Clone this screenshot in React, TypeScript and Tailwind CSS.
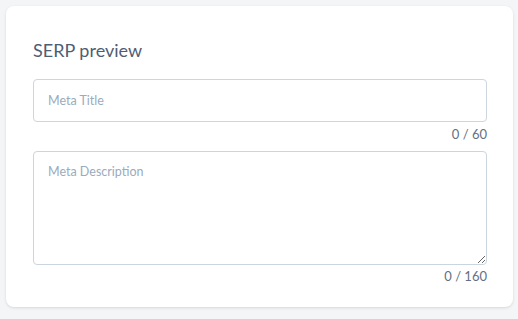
export default function App() {
  return (
    <div
      className="min-h-screen bg-[#f4f5f7] p-[6px]"
      style={{ fontFamily: 'Lato, "Noto Sans", sans-serif' }}
    >
      <div className="w-[507px] rounded-lg bg-white px-[27px] pt-[32px] pb-[22px] shadow-[0_1px_3px_rgba(0,0,0,0.12)]">
        <h2 className="text-[18px] leading-[24px] font-normal text-[#4f5d73]">SERP preview</h2>

        <div className="mt-[17px]">
          <input
            type="text"
            placeholder="Meta Title"
            className="block h-[43px] w-[454px] rounded border border-[#cdd5de] px-[14px] text-[12.5px] text-[#4f5d73] outline-none placeholder:text-[#9aabbd]"
          />
          <div className="mt-[3px] w-[454px] text-right text-[13px] leading-[18px] text-[#627084]">0 / 60</div>
        </div>

        <div className="mt-[8px]">
          <textarea
            placeholder="Meta Description"
            className="block h-[114px] w-[454px] rounded border border-[#cbd5df] px-[14px] py-[11px] text-[12.5px] leading-[18px] text-[#4f5d73] outline-none placeholder:text-[#9aabbd]"
          />
          <div className="mt-[2px] w-[454px] text-right text-[13px] leading-[18px] text-[#627084]">0 / 160</div>
        </div>
      </div>
    </div>
  )
}
